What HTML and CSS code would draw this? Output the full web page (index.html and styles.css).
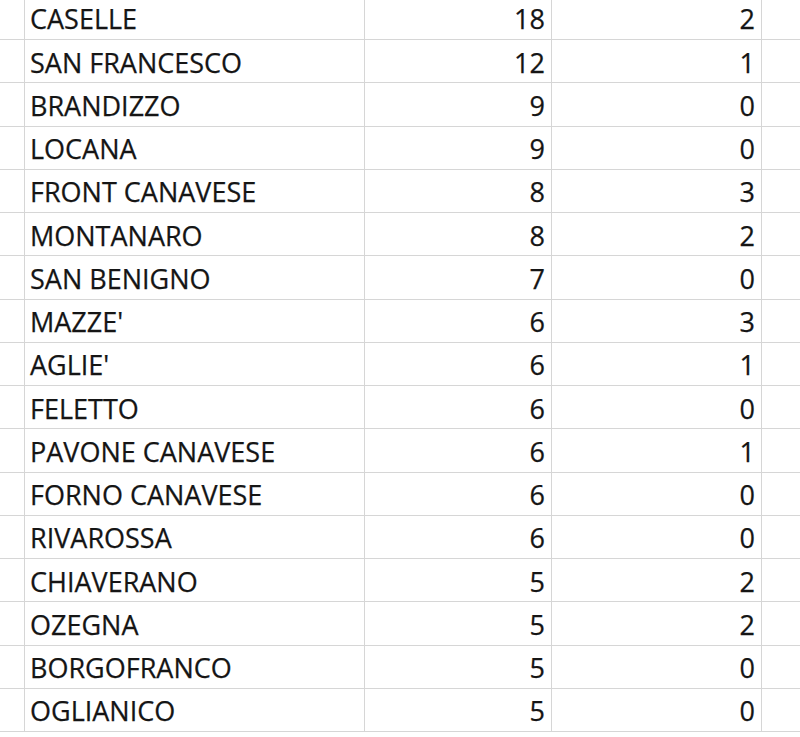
FILE: index.html
```html
<!DOCTYPE html>
<html>
<head>
<meta charset="utf-8">
<link rel="stylesheet" href="styles.css">
</head>
<body>
<div class="sheet">
  <div class="row"><div class="c0"></div><div class="name">CASELLE</div><div class="num">18</div><div class="num">2</div><div class="c4"></div></div>
  <div class="row"><div class="c0"></div><div class="name">SAN FRANCESCO</div><div class="num">12</div><div class="num">1</div><div class="c4"></div></div>
  <div class="row"><div class="c0"></div><div class="name">BRANDIZZO</div><div class="num">9</div><div class="num">0</div><div class="c4"></div></div>
  <div class="row"><div class="c0"></div><div class="name">LOCANA</div><div class="num">9</div><div class="num">0</div><div class="c4"></div></div>
  <div class="row"><div class="c0"></div><div class="name">FRONT CANAVESE</div><div class="num">8</div><div class="num">3</div><div class="c4"></div></div>
  <div class="row"><div class="c0"></div><div class="name">MONTANARO</div><div class="num">8</div><div class="num">2</div><div class="c4"></div></div>
  <div class="row"><div class="c0"></div><div class="name">SAN BENIGNO</div><div class="num">7</div><div class="num">0</div><div class="c4"></div></div>
  <div class="row"><div class="c0"></div><div class="name">MAZZE'</div><div class="num">6</div><div class="num">3</div><div class="c4"></div></div>
  <div class="row"><div class="c0"></div><div class="name">AGLIE'</div><div class="num">6</div><div class="num">1</div><div class="c4"></div></div>
  <div class="row"><div class="c0"></div><div class="name">FELETTO</div><div class="num">6</div><div class="num">0</div><div class="c4"></div></div>
  <div class="row"><div class="c0"></div><div class="name">PAVONE CANAVESE</div><div class="num">6</div><div class="num">1</div><div class="c4"></div></div>
  <div class="row"><div class="c0"></div><div class="name">FORNO CANAVESE</div><div class="num">6</div><div class="num">0</div><div class="c4"></div></div>
  <div class="row"><div class="c0"></div><div class="name">RIVAROSSA</div><div class="num">6</div><div class="num">0</div><div class="c4"></div></div>
  <div class="row"><div class="c0"></div><div class="name">CHIAVERANO</div><div class="num">5</div><div class="num">2</div><div class="c4"></div></div>
  <div class="row"><div class="c0"></div><div class="name">OZEGNA</div><div class="num">5</div><div class="num">2</div><div class="c4"></div></div>
  <div class="row"><div class="c0"></div><div class="name">BORGOFRANCO</div><div class="num">5</div><div class="num">0</div><div class="c4"></div></div>
  <div class="row"><div class="c0"></div><div class="name">OGLIANICO</div><div class="num">5</div><div class="num">0</div><div class="c4"></div></div>
</div>
</body>
</html>
```
FILE: styles.css
```css
html, body {
  margin: 0;
  padding: 0;
  background: #ffffff;
  overflow: hidden;
}
.sheet {
  margin-top: -3.25px;
  font-family: "Open Sans", "Noto Sans", sans-serif;
  font-size: 27px;
  font-weight: 400;
  color: #151515;
  -webkit-text-stroke: 0.25px #151515;
}
.row {
  display: grid;
  grid-template-columns: 25px 340px 187px 210px 1fr;
  height: 43.25px;
  box-sizing: border-box;
  border-bottom: 1px solid #d6d6d6;
}
.row > div {
  border-right: 1px solid #d6d6d6;
  display: flex;
  align-items: center;
  box-sizing: border-box;
  white-space: nowrap;
  padding-top: 2px;
}
.row > .c4 { border-right: none; }
.name {
  padding-left: 5px;
}
.num {
  justify-content: flex-end;
  padding-right: 6px;
}
```
